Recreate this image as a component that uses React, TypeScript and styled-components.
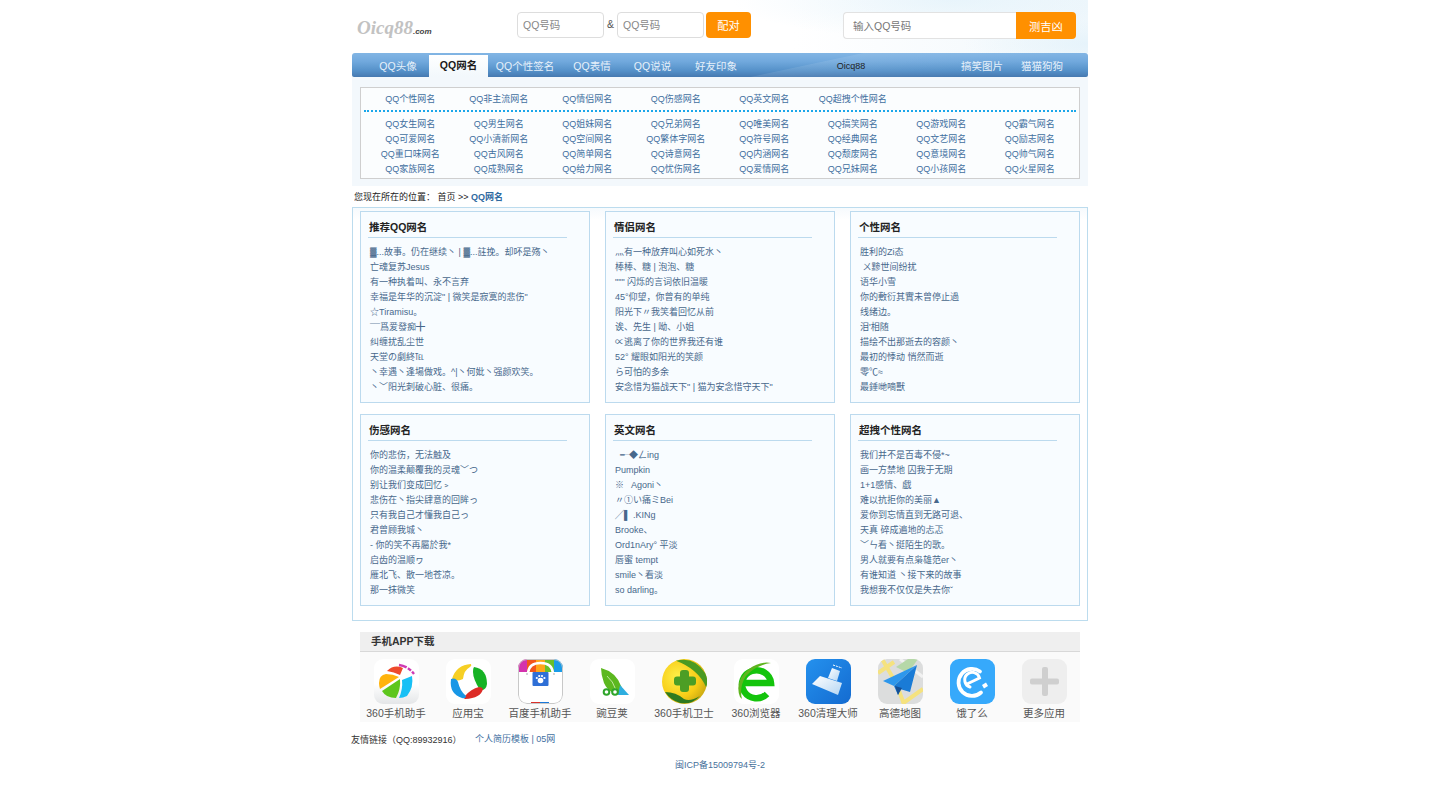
import React from "react";
import styled, { createGlobalStyle } from "styled-components";

const FONT = `"Liberation Sans", "Noto Sans CJK SC", sans-serif`;

const Global = createGlobalStyle`
  html, body { margin: 0; padding: 0; background: #fff; }
  body { font-family: ${FONT}; font-size: 9px; color: #222; }
  * { box-sizing: border-box; }
`;

const Page = styled.div`
  width: 736px;
  margin: 0 auto;
`;

const Header = styled.header`
  height: 53px;
  display: flex;
  align-items: flex-start;
  padding: 12px 12px 0 5px;
  background:
    radial-gradient(ellipse 130px 24px at 740px 44px, rgba(222, 240, 250, 0.6), rgba(255, 255, 255, 0) 100%),
    radial-gradient(ellipse 220px 40px at 600px 0px, rgba(222, 240, 250, 0.6), rgba(255, 255, 255, 0) 100%),
    linear-gradient(90deg, #fff 60%, #f1f8fc 100%);
`;

const Logo = styled.div`
  width: 160px;
  height: 26px;
  line-height: 32px;
  font-family: "Liberation Serif", serif;
  font-size: 19px;
  font-weight: bold;
  font-style: italic;
  color: #c2c2c2;
  white-space: nowrap;
`;

const LogoSuffix = styled.span`
  font-family: "Liberation Sans", sans-serif;
  font-size: 8px;
  color: #444;
`;

const PairInput = styled.input`
  width: 87px;
  height: 26px;
  border: 1px solid #ddd;
  border-radius: 4px;
  background: #fff;
  padding: 0 5px;
  font-family: ${FONT};
  font-size: 10.5px;
  &::placeholder { color: #888; opacity: 1; }
`;

const Amp = styled.span`
  width: 13px;
  height: 26px;
  line-height: 24px;
  text-align: center;
  font-size: 10.5px;
  color: #555;
`;

const PairButton = styled.button`
  width: 45px;
  height: 26px;
  margin-left: 2px;
  border: 0;
  border-radius: 4px;
  padding: 0;
  background: #ff9000;
  color: #fff;
  font-family: ${FONT};
  font-size: 11.25px;
`;

const FortuneGroup = styled.div`
  margin-left: auto;
  display: flex;
  height: 27px;
`;

const FortuneInput = styled.input`
  width: 173px;
  height: 27px;
  border: 1px solid #e2e2e2;
  border-right: 0;
  border-radius: 4px 0 0 4px;
  background: #fff;
  padding: 0 9px;
  font-family: ${FONT};
  font-size: 10.5px;
  &::placeholder { color: #777; opacity: 1; }
`;

const FortuneButton = styled.button`
  width: 60px;
  height: 27px;
  border: 0;
  border-radius: 0 4px 4px 0;
  padding: 0;
  background: #ff9000;
  color: #fff;
  font-family: ${FONT};
  font-size: 11.25px;
`;

const Nav = styled.nav`
  height: 24px;
  display: flex;
  align-items: flex-end;
  padding: 0 16px 0 15px;
  border-radius: 3px 3px 2px 2px;
  background:
    linear-gradient(168deg, rgba(255, 255, 255, 0) 60%, rgba(255, 255, 255, 0.09) 60.5%, rgba(255, 255, 255, 0) 85%),
    linear-gradient(180deg, #82b5e4 0%, #71a9dd 35%, #5490c8 75%, #4679b0 100%);
`;

const Tab = styled.a<{ $w: number; $active?: boolean }>`
  width: ${(p) => p.$w}px;
  height: ${(p) => (p.$active ? 22 : 24)}px;
  line-height: ${(p) => (p.$active ? 21 : 26)}px;
  text-align: center;
  font-size: 10.5px;
  white-space: nowrap;
  color: ${(p) => (p.$active ? "#1a1a1a" : "#e6f0fa")};
  font-weight: ${(p) => (p.$active ? "bold" : "normal")};
  background: ${(p) => (p.$active ? "linear-gradient(180deg, #fff, #f2f8fc)" : "transparent")};
`;

const NavBrand = styled.span`
  width: 102px;
  margin-left: 51px;
  height: 24px;
  line-height: 27px;
  text-align: center;
  font-size: 9px;
  color: #222;
`;

const NavRight = styled.div`
  margin-left: auto;
  display: flex;
`;

const SubPanel = styled.section`
  height: 109px;
  padding: 10px 8px 0;
  background: #f3f8fc;
`;

const SubBox = styled.div`
  height: 92px;
  border: 1px solid #cfcfcf;
  background: #fbfdfe;
  padding: 4px 3px 0;
`;

const SubGrid = styled.div<{ $divided?: boolean }>`
  display: grid;
  grid-template-columns: repeat(8, 88.5px);
  grid-auto-rows: 15px;
  padding: ${(p) => (p.$divided ? "0 0 3px 2px" : "0 0 0 2px")};
  border-bottom: ${(p) => (p.$divided ? "2px dotted #1aa7ea" : "0")};
  margin-bottom: ${(p) => (p.$divided ? "5px" : "0")};
`;

const SubLink = styled.a`
  line-height: 15px;
  text-align: center;
  font-size: 9px;
  color: #3f6f9f;
  white-space: nowrap;
`;

const Crumb = styled.div`
  height: 21px;
  line-height: 22px;
  padding-left: 2px;
  font-size: 9px;
  color: #222;
  white-space: pre;
`;

const CrumbCurrent = styled.b`
  color: #2f6a9f;
`;

const Frame = styled.main`
  height: 414px;
  border: 1px solid #bcdcee;
  padding: 3px 7px 0;
  display: grid;
  grid-template-columns: repeat(3, 230px);
  grid-template-rows: repeat(2, 192px);
  column-gap: 15px;
  row-gap: 11px;
  background: linear-gradient(180deg, #f6fafd 0, #fff 12px);
`;

const Card = styled.article`
  border: 1px solid #bcdaee;
  background: #f8fcff;
  padding: 0 7px;
`;

const CardTitle = styled.h3`
  margin: 0 0 7px;
  width: 199px;
  height: 26px;
  line-height: 30px;
  padding-left: 1px;
  font-size: 10.5px;
  font-weight: bold;
  color: #222;
  border-bottom: 1px solid #bcdaee;
`;

const CardItem = styled.div`
  height: 15px;
  line-height: 15px;
  padding-left: 2px;
  font-size: 9px;
  color: #47688c;
  white-space: pre;
`;

const AppSection = styled.section`
  margin: 11px 8px 0;
  background: #fafafa;
`;

const AppHead = styled.h3`
  margin: 0;
  height: 20px;
  line-height: 18px;
  padding-left: 11px;
  font-size: 10.5px;
  font-weight: bold;
  color: #333;
  background: #efefef;
  border-bottom: 1px solid #d8d8d8;
`;

const AppGrid = styled.div`
  display: grid;
  grid-template-columns: repeat(10, 72px);
  height: 70px;
  padding-top: 7px;
`;

const AppCell = styled.a`
  display: flex;
  flex-direction: column;
  align-items: center;
`;

const AppGlyph = styled.svg`
  display: block;
  width: 45px;
  height: 45px;
  border-radius: 9px;
`;

const AppLabel = styled.span`
  margin-top: 2px;
  line-height: 14px;
  font-size: 10.5px;
  color: #555;
  white-space: nowrap;
`;

const Friends = styled.div`
  margin: 9px 0 0 -1px;
  height: 16px;
  display: flex;
  align-items: center;
  font-size: 9px;
`;

const FriendsLabel = styled.span`
  width: 124px;
  color: #333;
  white-space: nowrap;
  padding-top: 1px;
`;

const FriendsLinks = styled.span`
  color: #3f6f9f;
  white-space: pre;
  padding-bottom: 1px;
`;

const Icp = styled.footer`
  margin-top: 11px;
  text-align: center;
  line-height: 14px;
  font-size: 9px;
  color: #47719b;
`;

const Icon = ({ name }: { name: string }) => {
  const body: Record<string, React.ReactNode> = {
    assistant: (
      <>
        <defs>
          <linearGradient id="a1" x1="0" y1="0" x2="0" y2="1">
            <stop offset="0.55" stopColor="#fff" />
            <stop offset="1" stopColor="#e4e6e8" />
          </linearGradient>
        </defs>
        <rect width="45" height="45" fill="url(#a1)" />
        <path d="M5 24 Q5 16 12 15 Q19 15 25 18 L6 30 Q5 27 5 24Z" fill="#ffb30c" />
        <path d="M13 12 Q20 5 29 9 L26 16 Q20 13 13 12Z" fill="#ee4a2c" />
        <path d="M8 32 L26 20 Q27 30 22 39 Q12 39 8 32Z" fill="#5dc61d" />
        <path d="M28 21 L38 17 Q40 28 33 37 Q29 39 25 39 Q29 30 28 21Z" fill="#18c0f5" />
        <path d="M25 6 Q34 7 40 15" fill="none" stroke="#cf3ab4" strokeWidth="2.4" strokeDasharray="8 1.5 4 1.5" />
      </>
    ),
    yyb: (
      <>
        <rect width="45" height="45" fill="#fff" />
        <path d="M6 20 Q10 6 25 5 Q26 7 24 8 Q18 11 17 20 Q10 23 6 20Z" fill="#f6cf24" />
        <path d="M28 8 Q41 10 41 25 Q40 32 34 31 Q27 20 27 13 Q27 9 28 8Z" fill="#16b224" />
        <path d="M37 30 Q35 39 19 40 Q17 39 19 37 Q25 30 33 28 Q36 28 37 30Z" fill="#dd2c26" />
        <path d="M5 20 Q10 18 12 23 Q14 32 20 37 Q20 40 16 39 Q3 35 5 20Z" fill="#1897e6" />
      </>
    ),
    baidu: (
      <>
        <rect width="45" height="45" rx="9" fill="#fff" />
        <rect x="0" y="0" width="9" height="13" fill="#d433ad" />
        <rect x="9" y="0" width="9" height="13" fill="#f2561c" />
        <rect x="18" y="0" width="9" height="13" fill="#ffa61a" />
        <rect x="27" y="0" width="9" height="13" fill="#69bf2a" />
        <rect x="36" y="0" width="9" height="13" fill="#1a9ce8" />
        <rect x="0" y="13" width="45" height="32" fill="#fff" />
        <path d="M10 14 Q11 4 22.5 4 Q34 4 35 14" fill="none" stroke="#fff" strokeWidth="2.5" />
        <rect x="14.500" y="13" width="16" height="14" rx="1" fill="#2e6fd6" />
        <circle cx="22.500" cy="21.500" r="2.800" fill="#fff" />
        <circle cx="18.800" cy="19" r="1.100" fill="#fff" />
        <circle cx="21.200" cy="17" r="1.100" fill="#fff" />
        <circle cx="24" cy="17" r="1.100" fill="#fff" />
        <circle cx="26.400" cy="19" r="1.100" fill="#fff" />
        <path d="M9 14 V16 M36 14 V16" stroke="#aaa" strokeWidth="1" />
        <rect x="13" y="43" width="9" height="2" fill="#d9302a" />
        <rect x="22" y="43" width="9" height="2" fill="#1b78d9" />
        <rect x="0.500" y="0.500" width="44" height="44" rx="8.500" fill="none" stroke="#c8c8c8" />
      </>
    ),
    pea: (
      <>
        <rect width="45" height="45" fill="#fff" />
        <path d="M11 9 Q26 13 31 27 L36 36 Q20 37 14 24 Q11 16 11 9Z" fill="#5cb81f" />
        <path d="M17 17 Q23 22 26 31" fill="none" stroke="#bfe79d" strokeWidth="1" />
        <path d="M30 26 L39 36 H28Z" fill="#2eaee0" />
        <circle cx="16.500" cy="33" r="3.800" fill="#2fa52b" />
        <circle cx="25" cy="33" r="3.800" fill="#2fa52b" />
        <circle cx="16.500" cy="33" r="1.800" fill="#fff" />
        <circle cx="25" cy="33" r="1.800" fill="#fff" />
      </>
    ),
    guard: (
      <>
        <defs>
          <radialGradient id="g1" cx="0.35" cy="0.4" r="0.7">
            <stop offset="0" stopColor="#fff04a" />
            <stop offset="0.65" stopColor="#f7cc16" />
            <stop offset="1" stopColor="#c8a812" />
          </radialGradient>
        </defs>
        <rect width="45" height="45" fill="#fafafa" />
        <circle cx="22.500" cy="22.500" r="22.500" fill="url(#g1)" />
        <path d="M14 1.800 Q32 -3 43 14 Q47 22 44 28 Q36 10 14 1.800Z" fill="#4a9a22" />
        <path d="M3 33 Q14 33 22 40 Q28 43 38 37 Q30 46 18 44 Q8 41 3 33Z" fill="#2f7a20" />
        <rect x="18" y="11" width="9" height="22" rx="3" fill="#4c9e25" />
        <rect x="12" y="17.500" width="22" height="9" rx="3" fill="#4c9e25" />
      </>
    ),
    browser: (
      <>
        <rect width="45" height="45" fill="#fff" />
        <path d="M11 24 H37 A14.500 14 0 1 0 33 35" fill="none" stroke="#14c40c" strokeWidth="6.500" />
        <path d="M6 38 Q0 22 15 10 Q26 2 37 4 Q22 6 12 17 Q5 28 8 40Z" fill="#5fb51f" />
      </>
    ),
    cleaner: (
      <>
        <defs>
          <linearGradient id="c1" x1="0" y1="0" x2="1" y2="1">
            <stop offset="0" stopColor="#2491ee" />
            <stop offset="1" stopColor="#146bd0" />
          </linearGradient>
          <linearGradient id="c2" x1="0" y1="0" x2="1" y2="1">
            <stop offset="0" stopColor="#fff" />
            <stop offset="1" stopColor="#b5d6f3" />
          </linearGradient>
        </defs>
        <rect width="45" height="45" fill="url(#c1)" />
        <path d="M26 9 L34 12 L31 22 L22 19Z" fill="url(#c2)" />
        <path d="M14 17 L36 24 L32 36 L6 25Z" fill="url(#c2)" />
        <path d="M27 6 L36 9" stroke="#fff" strokeWidth="1" strokeDasharray="2 1" />
      </>
    ),
    amap: (
      <>
        <rect width="45" height="45" fill="#dcdddd" />
        <path d="M4 0 L18 24 L26 45 M0 14 L16 3 M24 45 L45 30" stroke="#f5e27f" strokeWidth="4" fill="none" />
        <path d="M22 0 L45 18" stroke="#f2f2f2" strokeWidth="3" />
        <path d="M18 8 L30 0 H40 L30 14Z" fill="#b6d8a8" />
        <path d="M39 6 L5 22 L16 27 Z" fill="#2d97ec" />
        <path d="M39 6 L16 27 L20 36 L22 30 L32 33Z" fill="#1a7bd6" />
        <path d="M17 27 L20 36 L24 29Z" fill="#154f94" />
      </>
    ),
    eleme: (
      <>
        <rect width="45" height="45" fill="#36a9fb" />
        <path d="M30 12.500 A13.500 13.500 0 1 0 31 33.500" fill="none" stroke="#fff" strokeWidth="3.800" strokeLinecap="round" />
        <path d="M17 25 L29.500 19 A7.500 7.500 0 1 0 20 28" fill="none" stroke="#fff" strokeWidth="3" strokeLinecap="round" />
        <path d="M32 26 l4 -2.500 l2 3.500 l-4 2.500Z" fill="#fff" />
      </>
    ),
    more: (
      <>
        <rect width="45" height="45" fill="#eeeeee" />
        <rect x="20" y="8" width="6" height="29" rx="2" fill="#cfcfcf" />
        <rect x="8" y="19.500" width="29" height="6" rx="2" fill="#cfcfcf" />
      </>
    ),
  };
  return <AppGlyph viewBox="0 0 45 45" aria-hidden="true">{body[name]}</AppGlyph>;
};

const mainTabs = [
  { t: "QQ头像", w: 62 },
  { t: "QQ网名", w: 59, active: true },
  { t: "QQ个性签名", w: 74 },
  { t: "QQ表情", w: 60 },
  { t: "QQ说说", w: 61 },
  { t: "好友印象", w: 66 },
];

const topRow = ["QQ个性网名", "QQ非主流网名", "QQ情侣网名", "QQ伤感网名", "QQ英文网名", "QQ超拽个性网名"];
const subRows = [
  "QQ女生网名", "QQ男生网名", "QQ姐妹网名", "QQ兄弟网名", "QQ唯美网名", "QQ搞笑网名", "QQ游戏网名", "QQ霸气网名",
  "QQ可爱网名", "QQ小清新网名", "QQ空间网名", "QQ繁体字网名", "QQ符号网名", "QQ经典网名", "QQ文艺网名", "QQ励志网名",
  "QQ重口味网名", "QQ古风网名", "QQ简单网名", "QQ诗意网名", "QQ内涵网名", "QQ颓废网名", "QQ意境网名", "QQ帅气网名",
  "QQ家族网名", "QQ成熟网名", "QQ给力网名", "QQ忧伤网名", "QQ爱情网名", "QQ兄妹网名", "QQ小孩网名", "QQ火星网名",
];

const cards = [
  {
    title: "推荐QQ网名",
    items: [
      "▓...故事。仍在继续丶 | ▓...註挽。却吥是殇丶",
      "亡魂复苏Jesus",
      "有一种执着叫、永不言弃",
      "幸福是年华的沉淀\" | 微笑是寂寞的悲伤\"",
      "☆Tiramisu。",
      "¯¯爲爱發痴╋",
      "纠缠扰乱尘世",
      "天堂の劇終℡",
      "丶幸遇丶逢場做戏。^|丶何妣丶强颜欢笑。",
      "丶﹀阳光刺破心脏、很痛。",
    ],
  },
  {
    title: "情侣网名",
    items: [
      "灬有一种放弃叫心如死水丶",
      "棒棒、糖 | 泡泡、糖",
      "\"\"\" 闪烁的言词依旧温暖",
      "45°仰望，你曾有的单纯",
      "阳光下〃我笑着回忆从前",
      "诶、先生 | 呦、小姐",
      "∝逃离了你的世界我还有谁",
      "52° 耀眼如阳光的笑颜",
      "ら可怕的多余",
      "安念惜为猫战天下\" | 猫为安念惜守天下\"",
    ],
  },
  {
    title: "个性网名",
    items: [
      "胜利的Zi态",
      " ㄨ黪世间纷扰",
      "语华小雪",
      "你的敷衍其實未曾停止過",
      "线绪边。",
      "泪'相随",
      "描绘不出那逝去的容颜丶",
      "最初的悸动 悄然而逝",
      "零℃≈",
      "最錘哋嘀獸",
    ],
  },
  {
    title: "伤感网名",
    items: [
      "你的悲伤，无法触及",
      "你的温柔颠覆我的灵魂﹀つ",
      "别让我们变成回忆﹥",
      "悲伤在丶指尖肆意的回眸っ",
      "只有我自己才懂我自己っ",
      "君曾顾我城丶",
      "- 你的笑不再屬於我*",
      "启齿的温顺ヮ",
      "雁北飞、散一地苍凉。",
      "那一抹微笑",
    ],
  },
  {
    title: "英文网名",
    items: [
      "  ╾◆ㄥing",
      "Pumpkin",
      "※   Agoni丶",
      "〃①い痛ミBei",
      "╱▌ .KINg",
      "Brooke、",
      "Ord1nAry° 平淡",
      "唇蜜 tempt",
      "smile丶看淡",
      "so darling。",
    ],
  },
  {
    title: "超拽个性网名",
    items: [
      "我们并不是百毒不侵*~",
      "画一方禁地 囚我于无期",
      "1+1感情、戯",
      "难以抗拒你的美丽▲",
      "爱你到忘情直到无路可退、",
      "天真 碎成遍地的忐忑",
      "﹀ㄣ看丶挺陌生的歌。",
      "男人就要有点枭雄范er丶",
      "有谁知道 丶接下来的故事",
      "我想我不仅仅是失去你ˇ",
    ],
  },
];

const apps = [
  { icon: "assistant", label: "360手机助手" },
  { icon: "yyb", label: "应用宝" },
  { icon: "baidu", label: "百度手机助手" },
  { icon: "pea", label: "豌豆荚" },
  { icon: "guard", label: "360手机卫士" },
  { icon: "browser", label: "360浏览器" },
  { icon: "cleaner", label: "360清理大师" },
  { icon: "amap", label: "高德地图" },
  { icon: "eleme", label: "饿了么" },
  { icon: "more", label: "更多应用" },
];

export default function App() {
  return (
    <Page>
      <Global />
      <Header>
        <Logo>
          Oicq88<LogoSuffix>.com</LogoSuffix>
        </Logo>
        <PairInput placeholder="QQ号码" />
        <Amp>&amp;</Amp>
        <PairInput placeholder="QQ号码" />
        <PairButton>配对</PairButton>
        <FortuneGroup>
          <FortuneInput placeholder="输入QQ号码" />
          <FortuneButton>测吉凶</FortuneButton>
        </FortuneGroup>
      </Header>

      <Nav>
        {mainTabs.map((tab) => (
          <Tab key={tab.t} $w={tab.w} $active={tab.active}>
            {tab.t}
          </Tab>
        ))}
        <NavBrand>Oicq88</NavBrand>
        <NavRight>
          <Tab $w={60}>搞笑图片</Tab>
          <Tab $w={60}>猫猫狗狗</Tab>
        </NavRight>
      </Nav>

      <SubPanel>
        <SubBox>
          <SubGrid $divided>
            {topRow.map((t) => (
              <SubLink key={t}>{t}</SubLink>
            ))}
          </SubGrid>
          <SubGrid>
            {subRows.map((t) => (
              <SubLink key={t}>{t}</SubLink>
            ))}
          </SubGrid>
        </SubBox>
      </SubPanel>

      <Crumb>
        您现在所在的位置： 首页 {">>"} <CrumbCurrent>QQ网名</CrumbCurrent>
      </Crumb>

      <Frame>
        {cards.map((card) => (
          <Card key={card.title}>
            <CardTitle>{card.title}</CardTitle>
            {card.items.map((item) => (
              <CardItem key={item}>{item}</CardItem>
            ))}
          </Card>
        ))}
      </Frame>

      <AppSection>
        <AppHead>手机APP下载</AppHead>
        <AppGrid>
          {apps.map((app) => (
            <AppCell key={app.label}>
              <Icon name={app.icon} />
              <AppLabel>{app.label}</AppLabel>
            </AppCell>
          ))}
        </AppGrid>
      </AppSection>

      <Friends>
        <FriendsLabel>友情链接（QQ:89932916）</FriendsLabel>
        <FriendsLinks>个人简历模板 | 05网</FriendsLinks>
      </Friends>

      <Icp>闽ICP备15009794号-2</Icp>
    </Page>
  );
}
